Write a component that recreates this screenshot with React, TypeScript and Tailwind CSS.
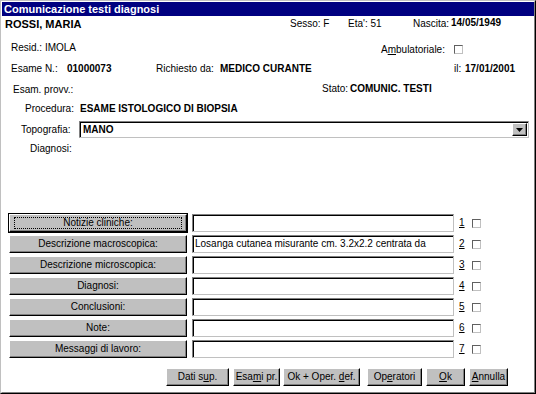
import React from "react";

const raised =
  "bg-[#c0c0c0] border border-t-white border-l-white border-r-black border-b-black shadow-[inset_-1px_-1px_0_#808080] whitespace-nowrap";
const sunken =
  "bg-white border border-t-[#808080] border-l-[#808080] border-r-[#c0c0c0] border-b-[#c0c0c0] shadow-[inset_1px_1px_0_#000] whitespace-nowrap overflow-hidden";

const CheckBox = () => (
  <div className="w-[9px] h-[9px] bg-white border border-t-[#606060] border-l-[#606060] border-r-[#c0c0c0] border-b-[#c0c0c0]" />
);

const sections = [
  { label: "Notizie cliniche:", text: "", focus: true },
  { label: "Descrizione macroscopica:", text: "Losanga cutanea misurante cm. 3.2x2.2 centrata da" },
  { label: "Descrizione microscopica:", text: "" },
  { label: "Diagnosi:", text: "" },
  { label: "Conclusioni:", text: "" },
  { label: "Note:", text: "" },
  { label: "Messaggi di lavoro:", text: "" },
];

export default function App() {
  return (
    <div
      className="w-[536px] h-[394px] bg-[#c0c0c0] border border-t-[#c0c0c0] border-l-[#c0c0c0] border-r-black border-b-black text-[10px] text-black leading-none overflow-hidden whitespace-nowrap"
      style={{ fontFamily: '"Liberation Sans", Arial, sans-serif' }}
    >
      <div className="h-full flex flex-col border border-t-white border-l-white border-r-[#808080] border-b-[#808080]">
        {/* Title bar */}
        <div className="h-[14px] bg-[#000080] text-white text-[11px] font-bold flex items-center pl-[2px]">
          Comunicazione testi diagnosi
        </div>

        <div className="flex-1 bg-white flex flex-col">
          {/* Patient header */}
          <div className="h-[16px] flex items-center pl-[3px]">
            <div className="w-[285px] font-bold text-[11px]">ROSSI, MARIA</div>
            <div className="w-[58px]">Sesso: F</div>
            <div className="w-[65px]">Eta': 51</div>
            <div className="w-[38px]">Nascita:</div>
            <div className="font-bold -mt-[3px]">14/05/1949</div>
          </div>

          <div className="h-[20px] mt-[6px] flex items-center pl-[9px]">
            <div className="w-[370px]">Resid.: IMOLA</div>
            <div className="w-[73px] mt-[3px]">
              A<span className="underline">m</span>bulatoriale:
            </div>
            <div className="mt-[3px]">
              <CheckBox />
            </div>
          </div>

          <div className="h-[20px] mt-[1px] flex items-center pl-[9px]">
            <div className="w-[56px]">Esame N.:</div>
            <div className="w-[89px] font-bold">01000073</div>
            <div className="w-[64px]">Richiesto da:</div>
            <div className="w-[234px] font-bold">MEDICO CURANTE</div>
            <div className="w-[11px]">il:</div>
            <div className="font-bold">17/01/2001</div>
          </div>

          <div className="h-[20px] flex items-center pl-[11px]">
            <div className="w-[309px] mt-[2px]">Esam. provv.:</div>
            <div className="w-[28px]">Stato:</div>
            <div className="font-bold -mt-[1px]">COMUNIC. TESTI</div>
          </div>

          <div className="h-[20px] flex items-center pl-[23px]">
            <div className="w-[55px]">Procedura:</div>
            <div className="font-bold">ESAME ISTOLOGICO DI BIOPSIA</div>
          </div>

          <div className="h-[17px] mt-[2px] flex items-center pl-[19px]">
            <div className="w-[58px]">Topografia:</div>
            <div className={`w-[450px] h-[17px] flex items-center ${sunken}`}>
              <div className="flex-1 font-bold pl-[3px]">MANO</div>
              <div className={`w-[15px] h-[13px] mr-[1px] flex items-center justify-center ${raised}`}>
                <svg width="7" height="4" viewBox="0 0 7 4">
                  <path d="M0 0h7L3.5 4z" fill="#000" />
                </svg>
              </div>
            </div>
          </div>

          <div className="h-[18px] mt-[2px] flex items-center pl-[28px]">Diagnosi:</div>

          {/* Sections */}
          <div className="mt-[56px] flex flex-col gap-[3px] pl-[7px]">
            {sections.map((s, i) => (
              <div key={i} className="h-[18px] flex items-center">
                <div
                  className={`w-[178px] h-[18px] flex items-center justify-center ${raised} ${
                    s.focus ? "outline outline-1 outline-black" : ""
                  }`}
                >
                  {s.focus ? (
                    <span className="border border-dotted border-black w-[168px] h-[12px] flex items-center justify-center">
                      {s.label}
                    </span>
                  ) : (
                    s.label
                  )}
                </div>
                <div className={`ml-[5px] w-[262px] h-[18px] flex items-center pl-[2px] ${sunken}`}>
                  {s.text}
                </div>
                <div className="ml-[5px] w-[13px] underline">{i + 1}</div>
                <CheckBox />
              </div>
            ))}
          </div>

          {/* Footer buttons */}
          <div className="mt-[10px] h-[18px] flex pl-[164px]">
            <div className={`w-[63px] flex items-center justify-center ${raised}`}>
              <span>Dati s<span className="underline">u</span>p.</span>
            </div>
            <div className={`ml-[4px] w-[47px] flex items-center justify-center ${raised}`}>
              <span>Esa<span className="underline">m</span>i pr.</span>
            </div>
            <div className={`ml-[3px] w-[77px] flex items-center justify-center ${raised}`}>
              <span>Ok + Oper. <span className="underline">d</span>ef.</span>
            </div>
            <div className={`ml-[7px] w-[55px] flex items-center justify-center ${raised}`}>
              <span>Op<span className="underline">e</span>ratori</span>
            </div>
            <div className={`ml-[4px] w-[39px] flex items-center justify-center ${raised}`}>
              <span><span className="underline">O</span>k</span>
            </div>
            <div className={`ml-[4px] w-[39px] flex items-center justify-center ${raised}`}>
              <span><span className="underline">A</span>nnulla</span>
            </div>
          </div>
        </div>
      </div>
    </div>
  );
}
